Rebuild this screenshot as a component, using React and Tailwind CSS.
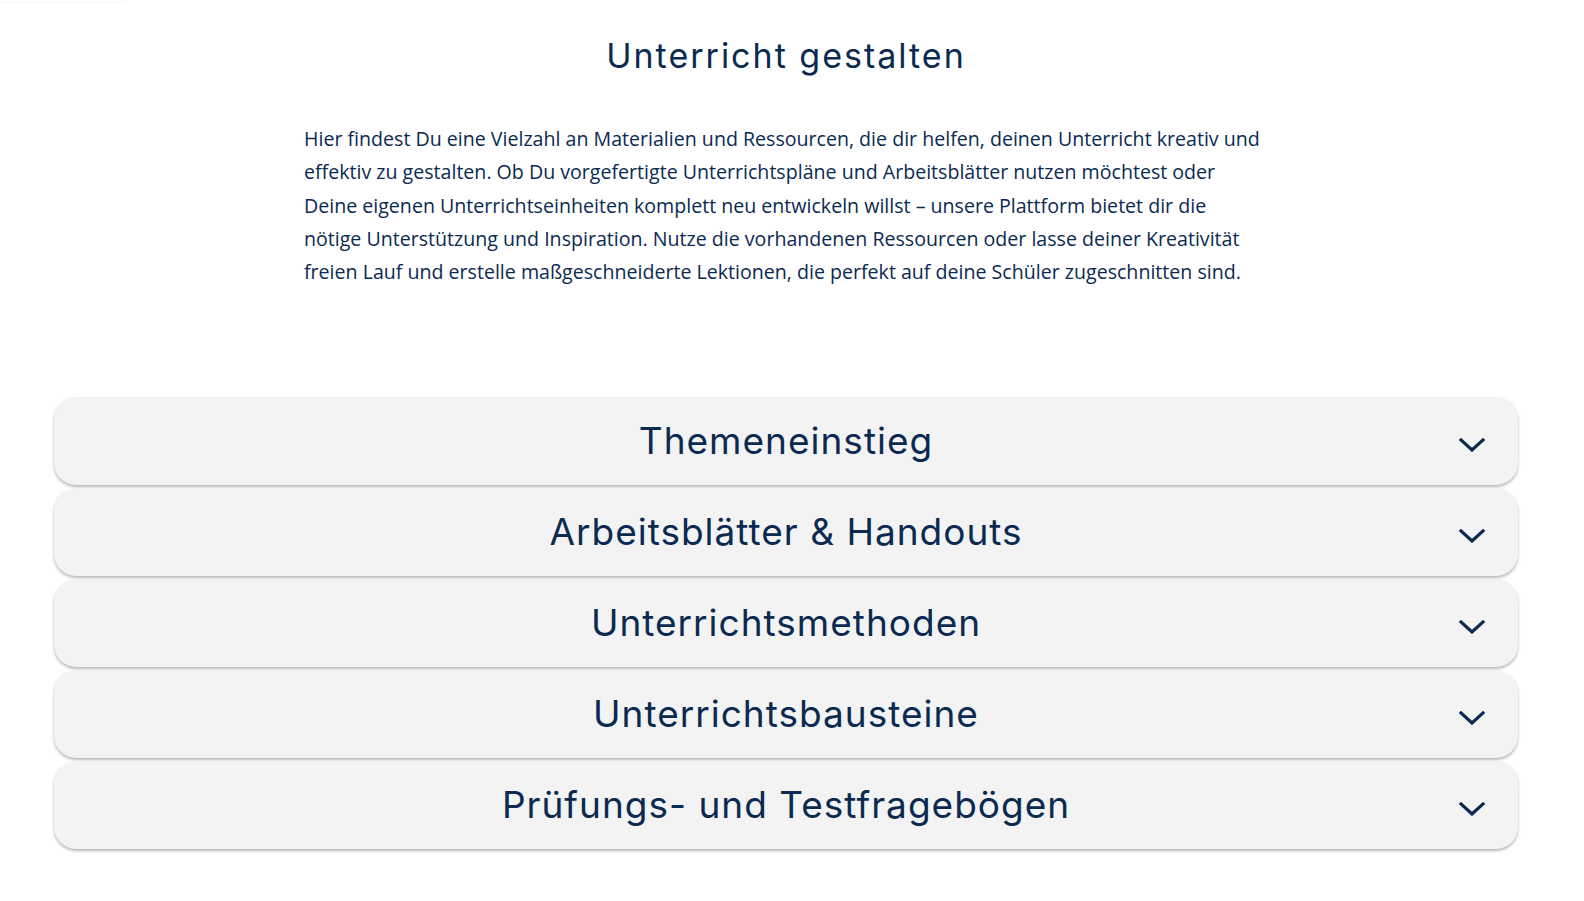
import React from "react";

const items = [
  "Themeneinstieg",
  "Arbeitsblätter & Handouts",
  "Unterrichtsmethoden",
  "Unterrichtsbausteine",
  "Prüfungs- und Testfragebögen",
];

const lines = [
  "Hier findest Du eine Vielzahl an Materialien und Ressourcen, die dir helfen, deinen Unterricht kreativ und",
  "effektiv zu gestalten. Ob Du vorgefertigte Unterrichtspläne und Arbeitsblätter nutzen möchtest oder",
  "Deine eigenen Unterrichtseinheiten komplett neu entwickeln willst – unsere Plattform bietet dir die",
  "nötige Unterstützung und Inspiration. Nutze die vorhandenen Ressourcen oder lasse deiner Kreativität",
  "freien Lauf und erstelle maßgeschneiderte Lektionen, die perfekt auf deine Schüler zugeschnitten sind.",
];

function Chevron() {
  return (
    <svg width="26" height="14" viewBox="0 0 26 14" fill="none">
      <path d="M2 2 L13 12 L24 2" stroke="#0b2a51" strokeWidth="3.2" strokeLinecap="square" strokeLinejoin="miter" />
    </svg>
  );
}

export default function App() {
  return (
    <div className="w-[1572px] bg-white min-h-[901px] text-[#0b2a51]">
      <div className="w-[125px] h-[1px] shadow-[0_0_4px_rgba(0,0,0,0.15)]" />
      <h1
        className="pt-[31px] text-center text-[34px] leading-[48px] font-normal tracking-[2px]"
        style={{ fontFamily: "Inter, 'DejaVu Sans', sans-serif" }}
      >
        Unterricht gestalten
      </h1>
      <div
        className="w-[964px] mx-auto mt-[42px] text-[19.6px] leading-[33.3px]"
        style={{ fontFamily: "'Open Sans', 'Liberation Sans', sans-serif" }}
      >
        {lines.map((l, i) => (
          <div key={i} className="whitespace-nowrap">{l}</div>
        ))}
      </div>
      <div className="mt-[109px] px-[54px] flex flex-col gap-[3px]">
        {items.map((t) => (
          <div
            key={t}
            className="h-[88px] rounded-[22px] bg-[#f3f3f3] shadow-[0_2px_3px_rgba(0,0,0,0.28)] grid grid-cols-[1fr_auto_1fr] items-center"
          >
            <div />
            <div
              className="text-[37px] font-normal tracking-[1px] leading-none pb-[2px]"
              style={{ fontFamily: "Inter, 'DejaVu Sans', sans-serif" }}
            >
              {t}
            </div>
            <div className="flex justify-end pr-[33px] pt-[8px]">
              <Chevron />
            </div>
          </div>
        ))}
      </div>
    </div>
  );
}
